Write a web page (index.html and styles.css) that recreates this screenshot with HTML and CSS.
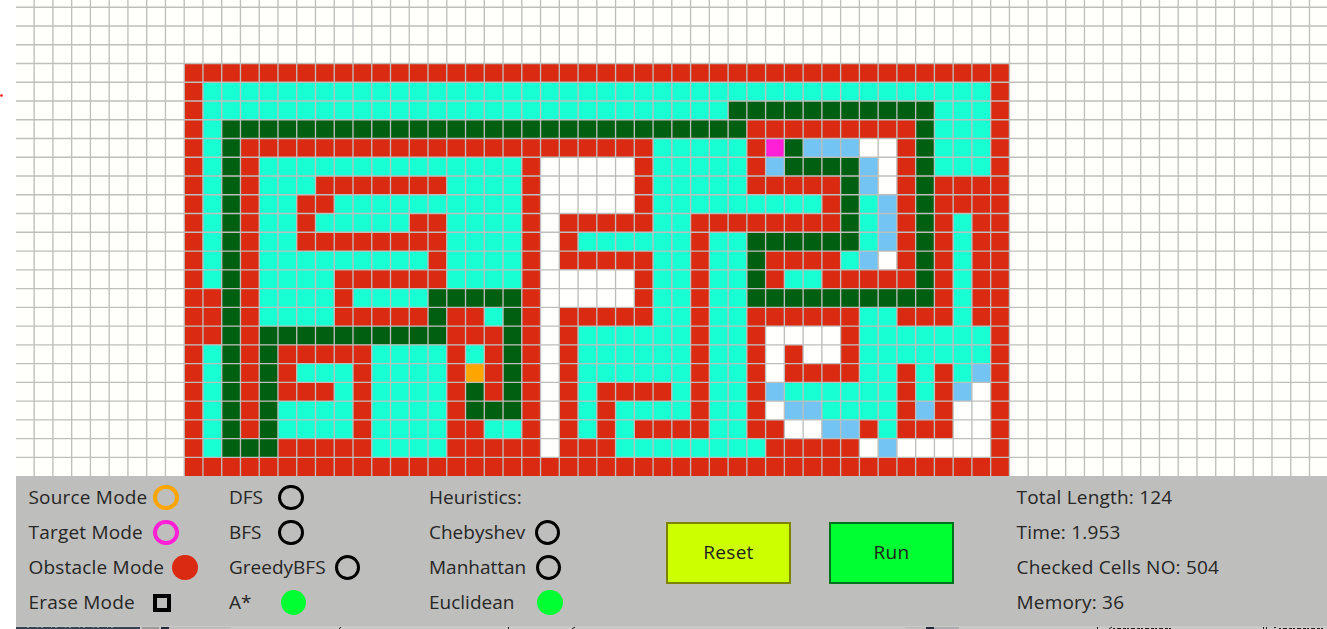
FILE: index.html
```html
<!DOCTYPE html>
<html lang="en">
<head>
<meta charset="utf-8">
<title>Path Finder</title>
<link rel="stylesheet" href="styles.css">
</head>
<body>
<div class="app">
  <svg class="board" id="board" width="1311" height="476" viewBox="16 0 1311 476"></svg>
  <div class="panel">
    <div class="column modes">
      <div class="option"><span class="label">Source Mode</span><i class="ring orange"></i></div>
      <div class="option"><span class="label">Target Mode</span><i class="ring pink"></i></div>
      <div class="option"><span class="label wide">Obstacle Mode</span><i class="dot red"></i></div>
      <div class="option"><span class="label">Erase Mode</span><i class="square"></i></div>
    </div>
    <div class="column algorithms">
      <div class="option"><span class="label">DFS</span><i class="ring"></i></div>
      <div class="option"><span class="label">BFS</span><i class="ring"></i></div>
      <div class="option"><span class="label wide">GreedyBFS</span><i class="ring"></i></div>
      <div class="option"><span class="label star">A*</span><i class="dot green"></i></div>
    </div>
    <div class="column heuristics">
      <div class="option"><span class="label">Heuristics:</span></div>
      <div class="option"><span class="label">Chebyshev</span><i class="ring"></i></div>
      <div class="option"><span class="label mid">Manhattan</span><i class="ring"></i></div>
      <div class="option"><span class="label wide">Euclidean</span><i class="dot green"></i></div>
    </div>
    <div class="actions">
      <button class="button reset">Reset</button>
      <button class="button run">Run</button>
    </div>
    <div class="column stats">
      <div class="option">Total Length: 124</div>
      <div class="option">Time: 1.953</div>
      <div class="option">Checked Cells NO: 504</div>
      <div class="option">Memory: 36</div>
    </div>
  </div>
  <svg class="edge" width="1311" height="3" viewBox="16 0 1311 3">
    <path fill="#c8c8c6" d="M16 0h1311v3H16z"/>
    <path fill="#344154" d="M16 1h124v2H16z"/>
    <path fill="#9a9a98" d="M142 1h17v2h-17z"/>
    <path fill="#202a3c" d="M161 1h8v2h-8zM926 1h8v2h-8z"/>
    <path fill="#bdbdbb" d="M169 1h62v2h-62zM905 1h21v2h-21z"/>
    <path fill="#a9adb1" d="M934 1h25v2h-25z"/>
    <path stroke="#22201e" stroke-width="1" fill="none" d="M339 3l2-2M508.500 1v2M572 3l3-2M1097.500 1v2M1109 3l3-2M1263.500 1v2M1266.500 1v2"/>
    <path stroke="#22201e" stroke-width="1" stroke-dasharray="2 2 4 2 3 1" d="M1113 2.500h60M1274 1.500h4M1279 2.500h44"/>
    <path stroke="#7d8894" stroke-width="1" stroke-dasharray="2 8 1 3" d="M27 1.500h90"/>
  </svg>
  <i class="speck"></i>
</div>
<script src="board.js"></script>
</body>
</html>
```

FILE: board.js
```js
// One string per row: count + cell type.
const rows = [
  "44R",
  "1R42C1R",
  "1R28C11G3C1R",
  "1R1C28G9R1G3C1R",
  "1R1C1G22R5C1R1P1G3B2W1R1G3C1R",
  "1R1C1G1R14C1R5W1R5C1R1B4G1B1W1R1G3C1R",
  "1R1C1G1R3C7R4C1R5W1R5C5R1G1B1W1R1G4R",
  "1R1C1G1R2C2R10C1R5W1R9C1R1G1C1B1R1G4R",
  "1R1C1G1R2C1R5C2R4C1R1W5R2C8R1G1C1B1R1G1R1C2R",
  "1R1C1G1R2C8R4C1R1W1R6C1R2C6G1C1B1R1G1R1C2R",
  "1R1C1G1R9C1R4C1R1W5R2C1R2C1G4R1C1B1W1R1G1R1C2R",
  "1R1C1G1R4C6R4C1R5W1R2C1R2C1G1R2C5R1G1R1C2R",
  "2R1G1R4C1R4C5G1R5W1R2C1R2C10G1R1C2R",
  "2R1G1R4C5R1G2R1C1G1R1W5R2C1R2C6R2C3R1C2R",
  "2R1G1R10G3R1G1R1W1R6C1R2C1R4W1R7C1R",
  "1R1C1G1R1G5R4C1R1C1R1G1R1W1R6C1R2C1R1W1R2W1R7C1R",
  "1R1C1G1R1G1R3C1R4C1R1O1R1G1R1W1R6C1R2C1R1W4R2C1R1C1R1C1B1R",
  "1R1C1G1R1G3R1C1R4C1R1G1R1G1R1W1R1C4R1C1R2C1R1B6C1R1C1R1B1W1R",
  "1R1C1G1R1G4C1R4C1R3G1R1W1R1C1R4C1R2C1R1W2B4C1R1B1R2W1R",
  "1R1C1G1R1G4C1R4C2R2C1R1W1R1C1R1C4R2C2R2W2B1R1C3R2W1R",
  "1R1C3G5R4C5R1W3R8C5R1W1B5W1R",
  "44R"
];
const colors = { R: "#da2a12", C: "#18ffd3", G: "#005f10", W: "#fffffd", B: "#73c3f3", O: "#ffa500", P: "#ff1fd6" };
const size = 18.755, left = 184.2, top0 = 63.5;
let out = '<rect x="16" y="0" width="1311" height="476" fill="#fffffb"/>';
rows.forEach((row, r) => {
  let c = 0;
  for (const [, n, type] of row.matchAll(/(\d+)([A-Z])/g)) {
    out += `<rect x="${left + c * size}" y="${top0 + r * size}" width="${n * size}" height="${size}" fill="${colors[type]}"/>`;
    c += +n;
  }
});
let lines = "";
for (let x = left - 8 * size; x < 1327; x += size) lines += `M${x} 0V476`;
for (let y = top0 - 3 * size; y < 470; y += size) lines += `M16 ${y}H1327`;
out += `<path d="${lines}" fill="none" stroke="#bebebc" stroke-width="1.35"/>`;
document.getElementById("board").innerHTML = out;
```

FILE: styles.css
```css
body { margin: 0; background: #fff; overflow: hidden; }
.app {
  position: relative;
  display: flex;
  flex-direction: column;
  width: 1311px;
  height: 629px;
  padding-left: 16px;
}
.board, .edge { display: block; flex: none; }
.panel {
  display: flex;
  box-sizing: border-box;
  height: 150px;
  padding: 4px 0 0 12.5px;
  background: #bebebc;
  color: #262626;
  font: 19px/35px "Open Sans", "Noto Sans", sans-serif;
}
.column { display: flex; flex-direction: column; flex: none; white-space: nowrap; }
.modes { width: 200.5px; letter-spacing: 0.2px; }
.algorithms { width: 200px; }
.heuristics { width: 237px; }
.stats { letter-spacing: 0.2px; }
.option { display: flex; align-items: center; height: 35px; }
.label { flex: none; }
.modes .label { width: 124.5px; }
.modes .wide { width: 143.5px; }
.algorithms .label { width: 49px; }
.algorithms .wide { width: 105.5px; }
.algorithms .star { width: 51.5px; }
.heuristics .label { width: 105.5px; }
.heuristics .mid { width: 106.5px; }
.heuristics .wide { width: 108px; }
.ring, .dot { box-sizing: border-box; flex: none; width: 25.5px; height: 25.5px; border-radius: 50%; }
.ring { border: 3px solid #000; }
.ring.orange { border: 4px solid #ffa500; }
.ring.pink { border: 4px solid #ff1fd6; }
.red { background: #da2a12; }
.green { background: #00ff32; }
.square { box-sizing: border-box; width: 18px; height: 18px; border: 4px solid #000; }
.actions { display: flex; flex: none; gap: 38px; width: 350.5px; padding-top: 42px; }
.button {
  box-sizing: border-box;
  width: 125px;
  height: 62px;
  padding: 0 0 2px;
  border: 2px solid;
  color: #1e1e1e;
  font: inherit;
  letter-spacing: 0.3px;
}
.reset { background: #ccff00; border-color: #7d8500; }
.run { background: #00ff32; border-color: #00701c; }
.speck { position: absolute; left: 0; top: 94px; width: 3px; height: 3px; background: radial-gradient(#f00 30%, #fbb 70%, #fff); }
```
